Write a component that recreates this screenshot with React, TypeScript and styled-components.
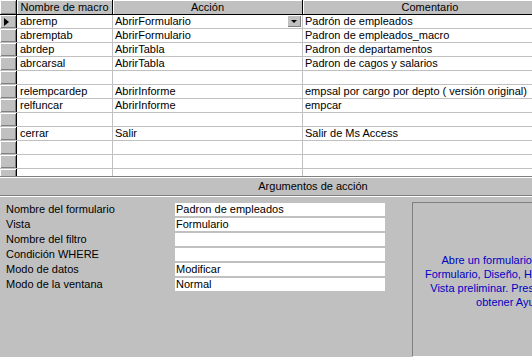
import React from "react";
import styled, { createGlobalStyle } from "styled-components";

const GlobalStyle = createGlobalStyle`
  html, body { margin: 0; padding: 0; background: #c0c0c0; }
  body { font-family: "Liberation Sans", Arial, sans-serif; font-size: 11px; color: #000; }
`;

const Viewport = styled.div`
  width: 532px;
  height: 357px;
  overflow: hidden;
  background: #c0c0c0;
`;

const Window = styled.div`
  width: 626px;
  display: flex;
  flex-direction: column;
`;

const Grid = styled.div`
  height: 176px;
  overflow: hidden;
  background: #fff;
  border-bottom: 1px solid #808080;
`;

const Row = styled.div<{ $header?: boolean }>`
  display: grid;
  grid-template-columns: 16px 95px 189px 254px;
  column-gap: 1px;
  height: ${(p) => (p.$header ? "14px" : "13px")};
  border-bottom: 1px solid ${(p) => (p.$header ? "#000" : "#c0c0c0")};
  background: ${(p) => (p.$header ? "#000" : "#c0c0c0")};
  width: max-content;
`;

const Selector = styled.div`
  background: #c0c0c0;
  border-right: 1px solid #000;
  margin-right: -1px;
  box-shadow: inset 1px 1px 0 #fff, inset -1px -1px 0 #808080;
  display: flex;
  align-items: center;
  padding-left: 4px;
`;

const HeadCell = styled.div`
  background: #c0c0c0;
  text-align: center;
  line-height: 14px;
  box-shadow: inset 1px 1px 0 #fff;
  white-space: nowrap;
  overflow: hidden;
`;

const Cell = styled.div<{ $pad?: number }>`
  position: relative;
  background: #fff;
  line-height: 13px;
  padding-left: ${(p) => p.$pad ?? 2}px;
  white-space: nowrap;
  overflow: hidden;
`;

const Arrow = styled.span`
  width: 0;
  height: 0;
  border-top: 4px solid transparent;
  border-bottom: 4px solid transparent;
  border-left: 5px solid #000;
`;

const DropButton = styled.div`
  position: absolute;
  right: 1px;
  top: 0;
  width: 14px;
  height: 12px;
  background: #c0c0c0;
  box-shadow: inset 1px 1px 0 #fff, inset -1px -1px 0 #808080;
  display: flex;
  align-items: center;
  justify-content: center;
  &::after {
    content: "";
    border-left: 3px solid transparent;
    border-right: 3px solid transparent;
    border-top: 3px solid #000;
  }
`;

const SectionHeader = styled.div`
  height: 17px;
  line-height: 17px;
  text-align: center;
  border-top: 1px solid #fff;
  border-bottom: 1px solid #808080;
  box-shadow: 0 1px 0 #fff;
`;

const Panel = styled.div`
  display: flex;
  padding: 6px 12px 0 6px;
`;

const Form = styled.div`
  display: grid;
  grid-template-columns: 169px 210px;
  row-gap: 2px;
  align-content: start;
  padding-top: 1px;
  width: 406px;
`;

const Label = styled.div`
  height: 13px;
  line-height: 13px;
  white-space: nowrap;
`;

const Field = styled.div`
  height: 13px;
  line-height: 13px;
  background: #fff;
  padding-left: 1px;
  white-space: nowrap;
`;

const HelpBox = styled.div`
  width: 200px;
  height: 150px;
  border-top: 1px solid #808080;
  border-left: 1px solid #808080;
  border-bottom: 1px solid #fff;
  border-right: 1px solid #fff;
  display: flex;
  align-items: center;
  justify-content: center;
  text-align: center;
  color: #0000c0;
  line-height: 14px;
  padding-top: 3px;
`;

const macros = [
  ["abremp", "AbrirFormulario", "Padrón de empleados"],
  ["abremptab", "AbrirFormulario", "Padron de empleados_macro"],
  ["abrdep", "AbrirTabla", "Padron de departamentos"],
  ["abrcarsal", "AbrirTabla", "Padron de cagos y salarios"],
  ["", "", ""],
  ["relempcardep", "AbrirInforme", "empsal por cargo por depto ( versión original)"],
  ["relfuncar", "AbrirInforme", "empcar"],
  ["", "", ""],
  ["cerrar", "Salir", "Salir de Ms Access"],
  ["", "", ""],
  ["", "", ""],
  ["", "", ""],
];

const args = [
  ["Nombre del formulario", "Padron de empleados"],
  ["Vista", "Formulario"],
  ["Nombre del filtro", ""],
  ["Condición WHERE", ""],
  ["Modo de datos", "Modificar"],
  ["Modo de la ventana", "Normal"],
];

export default function App() {
  return (
    <Viewport>
      <GlobalStyle />
      <Window>
        <Grid>
          <Row $header>
            <Selector />
            <HeadCell>Nombre de macro</HeadCell>
            <HeadCell>Acción</HeadCell>
            <HeadCell>Comentario</HeadCell>
          </Row>
          {macros.map(([name, action, comment], i) => (
            <Row key={i}>
              <Selector>{i === 0 && <Arrow />}</Selector>
              <Cell $pad={3}>{name}</Cell>
              <Cell>
                {action}
                {i === 0 && <DropButton />}
              </Cell>
              <Cell>{comment}</Cell>
            </Row>
          ))}
        </Grid>
        <SectionHeader>Argumentos de acción</SectionHeader>
        <Panel>
          <Form>
            {args.map(([label, value]) => (
              <React.Fragment key={label}>
                <Label>{label}</Label>
                <Field>{value}</Field>
              </React.Fragment>
            ))}
          </Form>
          <HelpBox>
            Abre un formulario en la vista
            <br />
            Formulario, Diseño, Hoja de datos o
            <br />
            Vista preliminar. Presione F1 para
            <br />
            obtener Ayuda.
          </HelpBox>
        </Panel>
      </Window>
    </Viewport>
  );
}
